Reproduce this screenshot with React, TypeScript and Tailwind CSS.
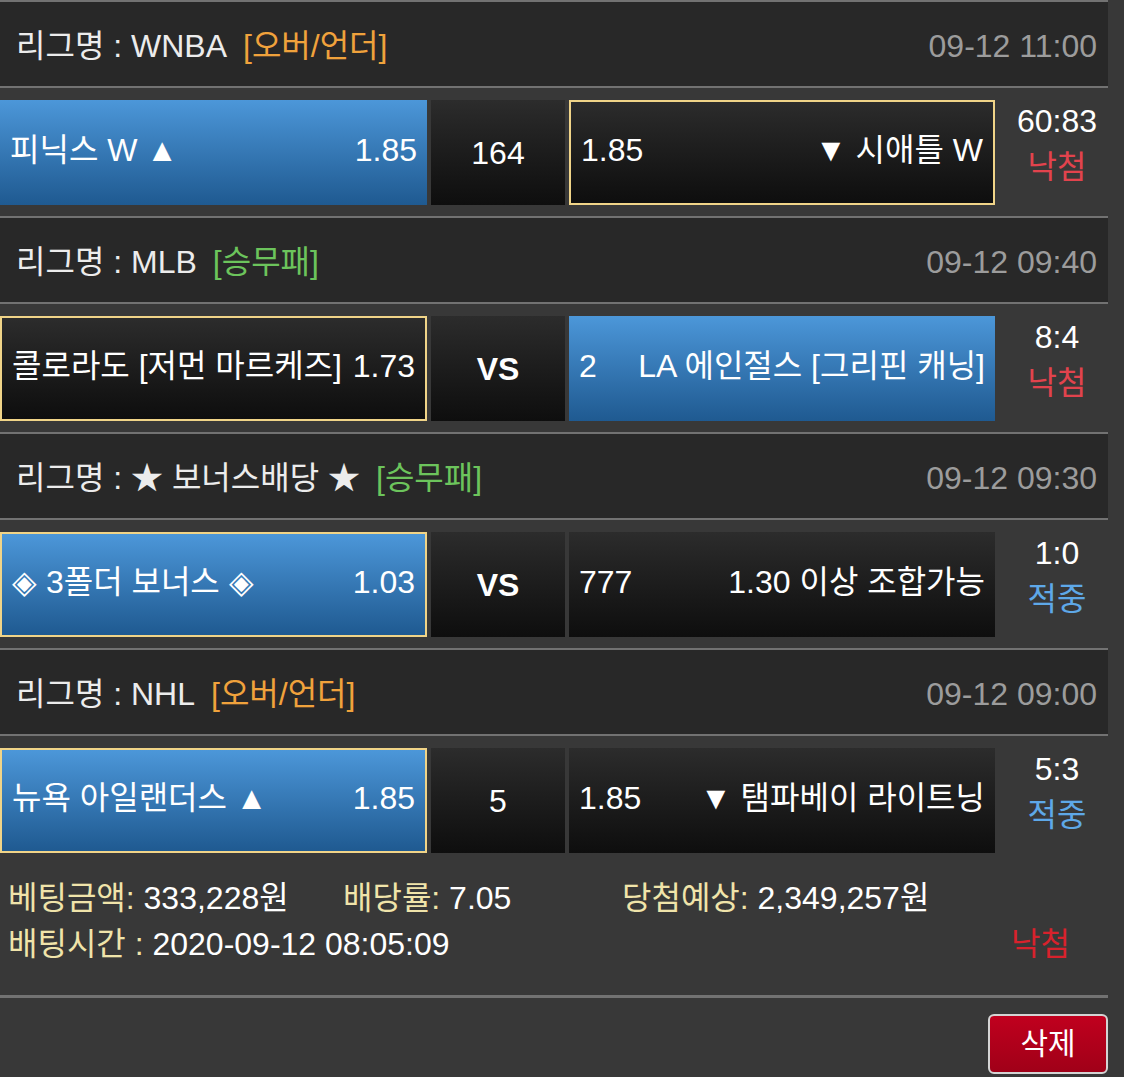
import React from 'react'

type Side = { name: string; odds: string; blue?: boolean; picked?: boolean }
type Game = {
  league: string
  tag: string
  tagColor: 'orange' | 'green'
  time: string
  home: Side
  mid: string
  away: Side
  score: string
  win: boolean
}

const games: Game[] = [
  {
    league: 'WNBA',
    tag: '[오버/언더]',
    tagColor: 'orange',
    time: '09-12 11:00',
    home: { name: '피닉스 W ▲', odds: '1.85', blue: true },
    mid: '164',
    away: { name: '▼ 시애틀 W', odds: '1.85', picked: true },
    score: '60:83',
    win: false,
  },
  {
    league: 'MLB',
    tag: '[승무패]',
    tagColor: 'green',
    time: '09-12 09:40',
    home: { name: '콜로라도 [저먼 마르케즈]', odds: '1.73', picked: true },
    mid: 'VS',
    away: { name: 'LA 에인절스 [그리핀 캐닝]', odds: '2', blue: true },
    score: '8:4',
    win: false,
  },
  {
    league: '★ 보너스배당 ★',
    tag: '[승무패]',
    tagColor: 'green',
    time: '09-12 09:30',
    home: { name: '◈ 3폴더 보너스 ◈', odds: '1.03', blue: true, picked: true },
    mid: 'VS',
    away: { name: '1.30 이상 조합가능', odds: '777' },
    score: '1:0',
    win: true,
  },
  {
    league: 'NHL',
    tag: '[오버/언더]',
    tagColor: 'orange',
    time: '09-12 09:00',
    home: { name: '뉴욕 아일랜더스 ▲', odds: '1.85', blue: true, picked: true },
    mid: '5',
    away: { name: '▼ 탬파베이 라이트닝', odds: '1.85' },
    score: '5:3',
    win: true,
  },
]

function cellClass(s: Side) {
  const bg = s.blue
    ? 'bg-gradient-to-b from-[#4c97d9] to-[#1f5a91]'
    : 'bg-gradient-to-b from-[#2c2c2c] to-[#0e0e0e]'
  const border = s.picked ? 'border-2 border-[#f0d488]' : ''
  return `flex h-[105px] items-center justify-between px-[10px] pb-[5px] ${bg} ${border}`
}

function Sep() {
  return <div className="h-[2px] bg-[#727272]" />
}

export default function App() {
  return (
    <div className="min-h-screen w-[1124px] bg-[#383838] font-['Liberation_Sans','Noto_Sans_CJK_KR',sans-serif] text-[32px] leading-none text-white">
      <div className="w-[1108px]">
        {games.map((g, i) => (
          <div key={i}>
            <Sep />
            <div className="flex h-[84px] items-center justify-between bg-[#282828] pl-4 pr-[11px] pt-1">
              <div className="flex items-center gap-4">
                <span className="text-[#ececec]">리그명 : {g.league}</span>
                <span className={g.tagColor === 'orange' ? 'text-[#f0a23c]' : 'text-[#6cc45c]'}>{g.tag}</span>
              </div>
              <span className="text-[#9c9c9c]">{g.time}</span>
            </div>
            <Sep />
            <div className={`flex gap-1 pt-[12px] ${i === games.length - 1 ? 'pb-0' : 'pb-[11px]'}`}>
              <div className={`w-[427px] ${cellClass(g.home)}`}>
                <span>{g.home.name}</span>
                <span>{g.home.odds}</span>
              </div>
              <div className="flex h-[105px] w-[134px] items-center justify-center bg-gradient-to-b from-[#2c2c2c] to-[#0e0e0e]">
                <span className={g.mid === 'VS' ? 'font-bold' : ''}>{g.mid}</span>
              </div>
              <div className={`w-[426px] ${cellClass(g.away)}`}>
                <span>{g.away.odds}</span>
                <span>{g.away.name}</span>
              </div>
              <div className="-mt-[2px] flex flex-1 flex-col items-center pl-[7px]">
                <span className="h-[46px] leading-[46px]">{g.score}</span>
                <span className={`h-[46px] leading-[46px] ${g.win ? 'text-[#5ea8e8]' : 'text-[#e2434d]'}`}>
                  {g.win ? '적중' : '낙첨'}
                </span>
              </div>
            </div>
          </div>
        ))}

        <div className="pb-[28px] pl-2 pt-[22px] leading-[46px]">
          <div className="flex">
            <div className="w-[335px]">
              <span className="text-[#f0e4aa]">베팅금액:</span> 333,228원
            </div>
            <div className="w-[279px]">
              <span className="text-[#f0e4aa]">배당률:</span> 7.05
            </div>
            <div>
              <span className="text-[#f0e4aa]">당첨예상:</span> 2,349,257원
            </div>
          </div>
          <div className="flex justify-between pr-[38px]">
            <div>
              <span className="text-[#f0e4aa]">배팅시간 :</span> 2020-09-12 08:05:09
            </div>
            <span className="text-[#d8222c]">낙첨</span>
          </div>
        </div>
        <div className="h-[3px] bg-[#727272]" />
        <div className="flex justify-end pt-4">
          <button className="h-[60px] w-[120px] rounded-md border-2 border-[#d4d4d4] bg-gradient-to-b from-[#c0001e] to-[#a00018] text-[30px] text-white">
            삭제
          </button>
        </div>
      </div>
    </div>
  )
}
